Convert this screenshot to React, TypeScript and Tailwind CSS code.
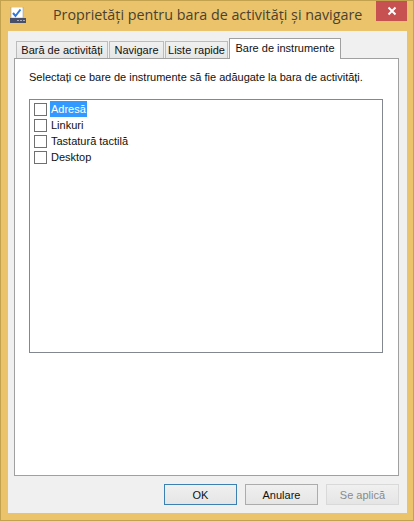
const uiFont = { fontFamily: '"Liberation Sans", sans-serif' };

const items = ['Adresă', 'Linkuri', 'Tastatură tactilă', 'Desktop'];

function Tab({ label, width, active }: { label: string; width: string; active?: boolean }) {
  if (active) {
    return (
      <div className={`relative z-10 -mb-px flex h-[21px] items-center justify-center whitespace-nowrap border border-b-0 border-[#a0a0a0] bg-white pb-[2px] text-[#111] ${width}`}>
        {label}
      </div>
    );
  }
  return (
    <div className={`flex h-[17px] items-center justify-center whitespace-nowrap border border-b-0 border-[#bcbcbc] bg-gradient-to-b from-[#f0f0f0] to-[#e6e6e6] text-[#111] ${width}`}>
      {label}
    </div>
  );
}

function DialogButton({ label, variant }: { label: string; variant?: 'default' | 'disabled' }) {
  const cls =
    variant === 'default'
      ? 'border-[#3c7fb1] text-[#111]'
      : variant === 'disabled'
        ? 'border-[#d9d9d9] text-[#8a8a8a]'
        : 'border-[#acacac] text-[#111]';
  return (
    <div
      className={`flex h-[21px] w-[73px] items-center justify-center border bg-gradient-to-b from-[#f0f0f0] to-[#e5e5e5] ${cls}`}
    >
      {label}
    </div>
  );
}

export default function App() {
  return (
    <div className="flex h-[521px] w-[414px] flex-col overflow-hidden border border-[#c2a14f] bg-[#eac36a] text-[11px] leading-[16px]" style={uiFont}>
      {/* bara de titlu */}
      <div className="flex h-[30px] shrink-0 items-start">
        <svg width="16" height="16" viewBox="0 0 16 16" className="ml-[9px] mt-[6px] shrink-0">
          <rect x="1" y="0" width="12" height="11" fill="#fff" stroke="#8a8f99" strokeWidth="0.5" />
          <path d="M3 6 L5.5 9 L10.5 2.5" fill="none" stroke="#2f78d8" strokeWidth="2" />
          <rect x="0" y="11" width="16" height="5" fill="#4a5068" />
          <rect x="7" y="13" width="2" height="1" fill="#aab" />
          <rect x="10" y="13" width="2" height="1" fill="#aab" />
          <rect x="13" y="13" width="2" height="1" fill="#aab" />
        </svg>
        <div className="ml-[27px] mt-[4px] whitespace-nowrap text-[14.3px] leading-[20px] text-[#4a4130]" style={{ fontFamily: '"Open Sans", sans-serif' }}>
          Proprietăți pentru bara de activități și navigare
        </div>
        <div className="ml-auto mr-[6px] flex h-[20px] w-[31px] items-center justify-center bg-[#c75050]">
          <svg width="10" height="10" viewBox="0 0 10 10">
            <path d="M1.5 1.5 L8.5 8.5 M8.5 1.5 L1.5 8.5" stroke="#fff" strokeWidth="2" />
          </svg>
        </div>
      </div>

      {/* continut */}
      <div className="ml-[7px] mr-[6px] mb-[7px] flex min-h-0 flex-1 flex-col bg-[#f0f0f0] pl-[6px] pr-[8px] pt-[7px]">
        <div className="flex items-end gap-px pl-[2px]">
          <Tab label="Bară de activități" width="w-[92px]" />
          <Tab label="Navigare" width="w-[55px]" />
          <Tab label="Liste rapide" width="w-[63px]" />
          <Tab label="Bare de instrumente" width="w-[112px]" active />
        </div>
        <div className="flex h-[418px] flex-col border border-[#a0a0a0] bg-white pl-[14px] pr-[15px] pt-[10px]">
          <div className="whitespace-nowrap text-[#111]">Selectați ce bare de instrumente să fie adăugate la bara de activități.</div>
          <div className="mt-[14px] h-[254px] border border-[#828790] bg-white pl-[4px] pt-px">
            {items.map((item, i) => (
              <div key={item} className="flex h-[16px] items-center">
                <div className="h-[13px] w-[13px] shrink-0 border border-[#707070] bg-white" />
                <span className={`ml-[3px] px-[1px] ${i === 0 ? 'bg-[#3399ff] text-white' : 'text-[#111]'}`}>{item}</span>
              </div>
            ))}
          </div>
        </div>
        <div className="mt-[8px] flex justify-end gap-[8px]">
          <DialogButton label="OK" variant="default" />
          <DialogButton label="Anulare" />
          <DialogButton label="Se aplică" variant="disabled" />
        </div>
      </div>
    </div>
  );
}
